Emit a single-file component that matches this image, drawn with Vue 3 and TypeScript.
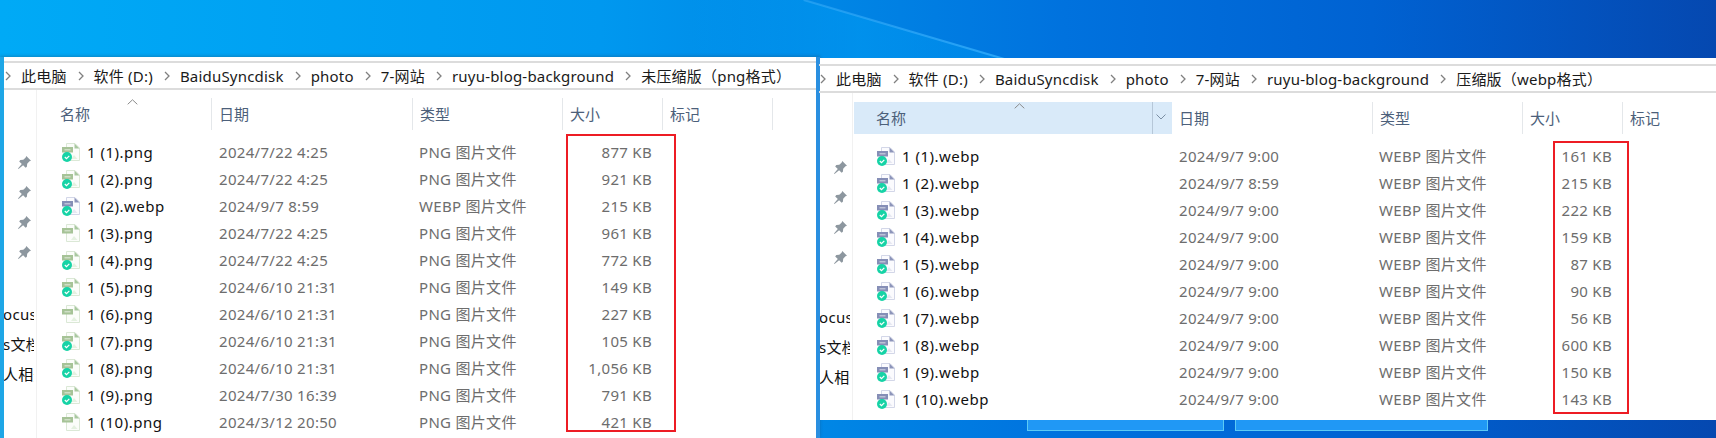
<script setup lang="ts">
type Row = { name: string; date: string; type: string; size: string; icon: 'png' | 'webp'; synced: boolean }

const pngRows: Row[] = [
  { name: '1 (1).png', date: '2024/7/22 4:25', type: 'PNG 图片文件', size: '877 KB', icon: 'png', synced: true },
  { name: '1 (2).png', date: '2024/7/22 4:25', type: 'PNG 图片文件', size: '921 KB', icon: 'png', synced: true },
  { name: '1 (2).webp', date: '2024/9/7 8:59', type: 'WEBP 图片文件', size: '215 KB', icon: 'webp', synced: true },
  { name: '1 (3).png', date: '2024/7/22 4:25', type: 'PNG 图片文件', size: '961 KB', icon: 'png', synced: false },
  { name: '1 (4).png', date: '2024/7/22 4:25', type: 'PNG 图片文件', size: '772 KB', icon: 'png', synced: true },
  { name: '1 (5).png', date: '2024/6/10 21:31', type: 'PNG 图片文件', size: '149 KB', icon: 'png', synced: true },
  { name: '1 (6).png', date: '2024/6/10 21:31', type: 'PNG 图片文件', size: '227 KB', icon: 'png', synced: false },
  { name: '1 (7).png', date: '2024/6/10 21:31', type: 'PNG 图片文件', size: '105 KB', icon: 'png', synced: true },
  { name: '1 (8).png', date: '2024/6/10 21:31', type: 'PNG 图片文件', size: '1,056 KB', icon: 'png', synced: true },
  { name: '1 (9).png', date: '2024/7/30 16:39', type: 'PNG 图片文件', size: '791 KB', icon: 'png', synced: true },
  { name: '1 (10).png', date: '2024/3/12 20:50', type: 'PNG 图片文件', size: '421 KB', icon: 'png', synced: false },
]

const webpSizes = ['161', '215', '222', '159', '87', '90', '56', '600', '150', '143']
const webpRows: Row[] = webpSizes.map((s, i) => ({
  name: `1 (${i + 1}).webp`,
  date: i === 1 ? '2024/9/7 8:59' : '2024/9/7 9:00',
  type: 'WEBP 图片文件',
  size: `${s} KB`,
  icon: 'webp',
  synced: true,
}))

const windows = [
  { id: 'left', rows: pngRows, crumbs: ['此电脑', '软件 (D:)', 'BaiduSyncdisk', 'photo', '7-网站', 'ruyu-blog-background', '未压缩版（png格式）'] },
  { id: 'right', rows: webpRows, crumbs: ['此电脑', '软件 (D:)', 'BaiduSyncdisk', 'photo', '7-网站', 'ruyu-blog-background', '压缩版（webp格式）'] },
]
const pins = [1, 2, 3, 4]
const cut = ['ocusa', 's文档', '人相册']
</script>

<template>
  <div class="desktop">
    <div class="glow"></div>
    <div class="streak"></div>
    <div class="task task-a"></div>
    <div class="task task-b"></div>
    <section v-for="w in windows" :key="w.id" class="win" :class="w.id">
      <div class="crumbs">
        <template v-for="c in w.crumbs" :key="c">
          <svg class="chev" width="6" height="10" viewBox="0 0 6 10"><path d="M1 1l4 4-4 4" fill="none" stroke="#808080" stroke-width="1.3" /></svg>
          <span class="crumb">{{ c }}</span>
        </template>
      </div>
      <div class="body">
        <aside class="side">
          <svg v-for="p in pins" :key="p" class="pin" width="15" height="15" viewBox="0 0 15 15">
            <path d="M9.300 1l4.700 4.700-1.500.6-2.300 2.400-.3 3-1.300 1.100-2.500-2.600L1.500 14 1 13.500l3.800-4.600L2.200 6.400l1.100-1.300 3-.3 2.400-2.300z" fill="#8d979f" />
          </svg>
          <div class="cuts">
            <div v-for="t in cut" :key="t" class="cut">{{ t }}</div>
          </div>
        </aside>
        <div class="main">
          <header class="head">
            <div class="h h-name">
              <span>名称</span>
              <svg class="sort" width="11" height="6" viewBox="0 0 11 6"><path d="M.7 5.300L5.500.8l4.800 4.500" fill="none" stroke="#8b8b8b" /></svg>
              <svg v-if="w.id === 'right'" class="drop" width="10" height="6" viewBox="0 0 10 6"><path d="M.5.500L5 5l4.500-4.500" fill="none" stroke="#7a8ea3" /></svg>
            </div>
            <div class="h">日期</div>
            <div class="h">类型</div>
            <div class="h">大小</div>
            <div class="h">标记</div>
          </header>
          <div class="rows">
            <div v-for="r in w.rows" :key="r.name" class="row">
              <div class="c-name">
                <svg class="file" width="18" height="19" viewBox="0 0 18 19">
                  <path d="M4.500.5h8.500l4.500 4.500v12.500H4.500z" :fill="r.icon === 'png' ? '#fbfdfa' : '#fbfbfe'" :stroke="r.icon === 'png' ? '#dbe8d6' : '#d3d7e8'" />
                  <path d="M12.500.5v5H17.500z" :fill="r.icon === 'png' ? '#a9c8a0' : '#8d95ba'" />
                  <path d="M9 16l3-4 3.500 4z" :fill="r.icon === 'png' ? '#e4f1e0' : '#e6e8f2'" />
                  <rect x="0" y="4" width="11" height="5.500" :fill="r.icon === 'png' ? '#a6c397' : '#858eb6'" />
                  <rect x="2.500" y="6" width="6" height="1.500" fill="#fff" opacity=".45" />
                  <template v-if="r.synced">
                    <circle cx="5" cy="14" r="5" fill="#16d3a6" />
                    <path d="M2.800 14l1.700 1.700L7.300 12.800" fill="none" stroke="#fff" stroke-width="1.200" />
                  </template>
                </svg>
                <span class="name">{{ r.name }}</span>
              </div>
              <div class="c-text">{{ r.date }}</div>
              <div class="c-text">{{ r.type }}</div>
              <div class="c-text c-size">{{ r.size }}</div>
            </div>
          </div>
          <div class="mark"></div>
        </div>
      </div>
    </section>
  </div>
</template>

<style>
html, body { margin: 0; padding: 0; overflow: hidden; }
</style>

<style scoped>
.desktop {
  position: relative;
  width: 1716px;
  height: 438px;
  overflow: hidden;
  font-family: "Noto Sans", "Noto Sans CJK SC", sans-serif;
  letter-spacing: .3px;
  background: linear-gradient(90deg, #00aaf6 0%, #0098ef 35%, #0088e6 47%, #0072de 62%, #0062d2 80%, #0548b0 100%);
}
.glow {
  position: absolute;
  inset: 0;
  background: linear-gradient(90deg, rgba(0, 160, 245, 0) 40%, rgba(0, 160, 245, .45) 50%, rgba(0, 160, 245, .3) 60%);
  clip-path: polygon(0 0, 804px 0, 1005px 60px, 0 60px);
}
.streak {
  position: absolute;
  left: 804px;
  top: -1px;
  width: 210px;
  height: 2px;
  background: linear-gradient(90deg, rgba(90, 190, 255, .35), rgba(45, 170, 250, .9));
  transform-origin: 0 0;
  transform: rotate(16.400deg);
}
.task {
  position: absolute;
  top: 420px;
  height: 11px;
  box-sizing: border-box;
  background: #2098f5;
  border: 1px solid #5ccaf5;
  border-top: none;
}
.task-a { left: 1027px; width: 197px; }
.task-b { left: 1235px; width: 253px; }
.win {
  position: absolute;
  display: flex;
  flex-direction: column;
  background: #fff;
  box-sizing: border-box;
}
.win.left {
  left: 0;
  top: 57px;
  width: 820px;
  height: 381px;
  border-left: 4px solid #1ea6e6;
  border-right: 4px solid #2a8fe0;
  box-shadow: 0 -1px 3px rgba(40, 60, 80, .3);
}
.win.right {
  left: 820px;
  top: 58px;
  width: 896px;
  height: 362px;
}
.crumbs {
  box-sizing: border-box;
  display: flex;
  align-items: center;
  flex: none;
  margin-top: 4px;
  height: 29px;
  border-top: 2px solid #dcdcdc;
  border-bottom: 2px solid #dcdcdc;
  font-size: 15px;
  letter-spacing: .2px;
  color: #1a1a1a;
  white-space: nowrap;
}
.win.right .crumbs { margin-top: 6px; margin-left: -1px; }
.chev { flex: none; margin: 0 10px 0 1px; }
.crumb { margin-right: 10px; }
.body { flex: 1; display: flex; min-height: 0; }
.side {
  box-sizing: border-box;
  width: 33px;
  flex: none;
  border-right: 1px solid #f1f1f1;
  display: flex;
  flex-direction: column;
  padding-top: 65px;
  overflow: hidden;
}
.win.right .side { padding-top: 67px; }
.pin { display: block; margin: 0 0 15px 13px; flex: none; }
.cuts { margin-top: 24px; }
.win.right .cuts { margin-top: 22px; }
.cut {
  width: 30px;
  height: 30px;
  overflow: hidden;
  font-size: 15px;
  line-height: 30px;
  color: #111;
  white-space: nowrap;
  text-indent: -1px;
}
.main { position: relative; flex: 1; min-width: 0; padding-top: 8px; }
.head { display: grid; grid-template-columns: 175px 201px 150px 100px 110px; height: 32px; letter-spacing: 0; }
.h {
  position: relative;
  box-sizing: border-box;
  border-right: 1px solid #e4e7ea;
  padding-left: 7px;
  font-size: 15px;
  line-height: 32px;
  color: #4c607a;
}
.h-name { padding-left: 23px; }
.sort { position: absolute; left: 90px; top: 1px; }
.rows { padding-top: 8px; }
.row { display: grid; grid-template-columns: 175px 200px 150px 90px; height: 27px; align-items: center; }
.c-name { display: flex; align-items: center; padding-left: 25px; }
.file { flex: none; margin-top: 1px; }
.name { margin-left: 7px; font-size: 15px; letter-spacing: .5px; color: #111; }
.c-text { padding-left: 7px; font-size: 15px; color: #6d6d6d; white-space: nowrap; }
.c-size { padding-left: 0; text-align: right; }
.mark { position: absolute; box-sizing: border-box; border: 2px solid #ed1c24; }
.win.left .mark { left: 529px; top: 44px; width: 110px; height: 298px; }

.win.right .main { padding-top: 9px; }
.win.right .head { grid-template-columns: 318px 201px 150px 100px 110px; margin-left: 1px; }
.win.right .h-name { padding-left: 22px; background: #d9eaf9; border-right: none; }
.win.right .h-name::after { content: ""; position: absolute; right: 19px; top: 0; bottom: 0; width: 1px; background: #b6c7d8; }
.win.right .sort { left: 160px; }
.win.right .drop { position: absolute; right: 6px; top: 12px; }
.win.right .row { grid-template-columns: 319px 200px 150px 90px; }
.win.right .c-name { padding-left: 24px; }
.win.right .mark { left: 700px; top: 48px; width: 76px; height: 273px; }
</style>
